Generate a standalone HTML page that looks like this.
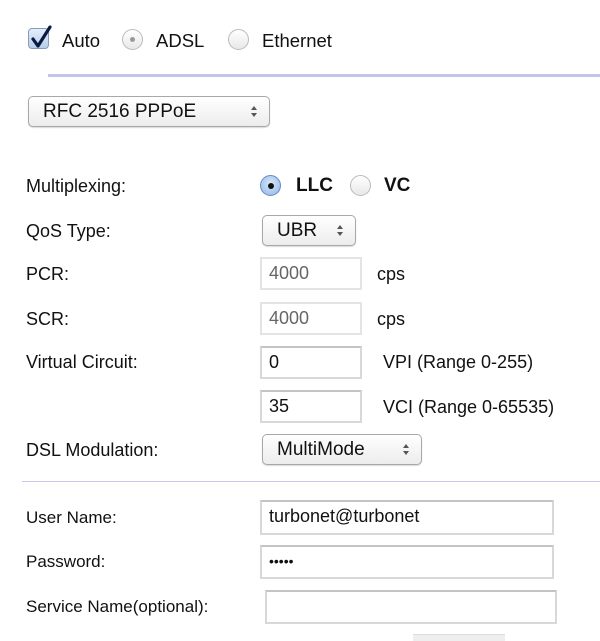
<!DOCTYPE html>
<html><head><meta charset="utf-8"><style>
body{margin:0;width:600px;height:638px;background:#fff;position:relative;overflow:hidden;font-family:"Liberation Sans",Arial,sans-serif;color:#111}
.a{position:absolute}
.t{position:absolute;font-size:18px;line-height:20px;white-space:nowrap}
.b{font-size:17px}
.radio{position:absolute;width:21px;height:21px;border-radius:50%;border:1px solid #bbb;background:linear-gradient(#fff,#e8e8e8);box-sizing:border-box}
.sel{position:absolute;border:1px solid #a8a8a8;border-radius:5px;background:linear-gradient(#fff,#ececec);box-sizing:border-box;font-size:19px;line-height:29px;padding-left:14px;box-shadow:0 1px 1px rgba(0,0,0,.15)}
.sel:after{content:"";position:absolute;right:12px;top:9px;width:0;height:0;border-left:3.5px solid transparent;border-right:3.5px solid transparent;border-bottom:4px solid #555}
.sel:before{content:"";position:absolute;right:12px;top:16px;width:0;height:0;border-left:3.5px solid transparent;border-right:3.5px solid transparent;border-top:4px solid #555}
.in{position:absolute;box-sizing:border-box;border:2px solid #d8d8d8;border-top-color:#c4c4c4;background:#fff;font-size:18px;padding-left:7px;line-height:29px}
.hr{position:absolute;height:2px;background:#c4c4ea}
</style></head><body>
<div class="a" style="left:28px;top:28px;width:21px;height:21px;border:1px solid #8a9ab8;border-radius:4px;box-sizing:border-box;background:linear-gradient(#e4eefb,#b8cdea)"></div>
<svg class="a" style="left:28px;top:24px" width="26" height="28"><path d="M5 15 L10 22 L22 3" stroke="#0a1a40" stroke-width="3.2" fill="none" stroke-linecap="round" stroke-linejoin="round"/></svg>
<div class="t" style="left:62px;top:31px;font-size:18.5px">Auto</div>
<div class="radio" style="left:122px;top:29px"></div><div class="a" style="left:130px;top:37px;width:5px;height:5px;border-radius:50%;background:#999"></div>
<div class="t" style="left:156px;top:31px;font-size:18.5px">ADSL</div>
<div class="radio" style="left:228px;top:29px"></div>
<div class="t" style="left:262px;top:31px;font-size:18.5px">Ethernet</div>
<div class="hr" style="left:48px;top:74px;width:552px;height:3px"></div>
<div class="sel" style="left:28px;top:96px;width:242px;height:31px">RFC 2516 PPPoE</div>

<div class="t" style="left:26px;top:176px">Multiplexing:</div>
<div class="radio" style="left:260px;top:175px;border-color:#6a8cc0;background:radial-gradient(circle at 50% 40%,#d8e8fb,#8fb4e6)"></div>
<div class="a" style="left:268px;top:183px;width:6px;height:6px;border-radius:50%;background:#111"></div>
<div class="t" style="left:296px;top:176px;font-weight:bold;font-size:19px">LLC</div>
<div class="radio" style="left:350px;top:175px"></div>
<div class="t" style="left:384px;top:176px;font-weight:bold;font-size:19px">VC</div>

<div class="t" style="left:26px;top:221px">QoS Type:</div>
<div class="sel" style="left:262px;top:215px;width:94px;height:31px">UBR</div>

<div class="t" style="left:26px;top:264px">PCR:</div>
<div class="in" style="left:260px;top:257px;width:102px;height:33px;color:#666;border-color:#e4e4e4">4000</div>
<div class="t" style="left:377px;top:264px">cps</div>
<div class="t" style="left:26px;top:309px">SCR:</div>
<div class="in" style="left:260px;top:302px;width:102px;height:33px;color:#666;border-color:#e4e4e4">4000</div>
<div class="t" style="left:377px;top:309px">cps</div>

<div class="t" style="left:26px;top:352px">Virtual Circuit:</div>
<div class="in" style="left:260px;top:346px;width:102px;height:33px">0</div>
<div class="t" style="left:383px;top:352px">VPI (Range 0-255)</div>
<div class="in" style="left:260px;top:390px;width:102px;height:33px">35</div>
<div class="t" style="left:383px;top:397px">VCI (Range 0-65535)</div>

<div class="t" style="left:26px;top:440px">DSL Modulation:</div>
<div class="sel" style="left:262px;top:434px;width:160px;height:31px">MultiMode</div>

<div class="hr" style="left:22px;top:481px;width:578px;height:1px;background:#c8c8e8"></div>

<div class="t b" style="left:26px;top:508px">User Name:</div>
<div class="in" style="left:260px;top:500px;width:294px;height:35px">turbonet@turbonet</div>
<div class="t b" style="left:26px;top:552px">Password:</div>
<div class="in" style="left:260px;top:545px;width:294px;height:34px;font-size:14px">•••••</div>
<div class="t b" style="left:26px;top:597px">Service Name(optional):</div>
<div class="in" style="left:265px;top:590px;width:292px;height:34px"></div>
<div class="a" style="left:413px;top:634px;width:92px;height:6px;background:#eee;border-top:1px solid #ddd"></div>
</body></html>
